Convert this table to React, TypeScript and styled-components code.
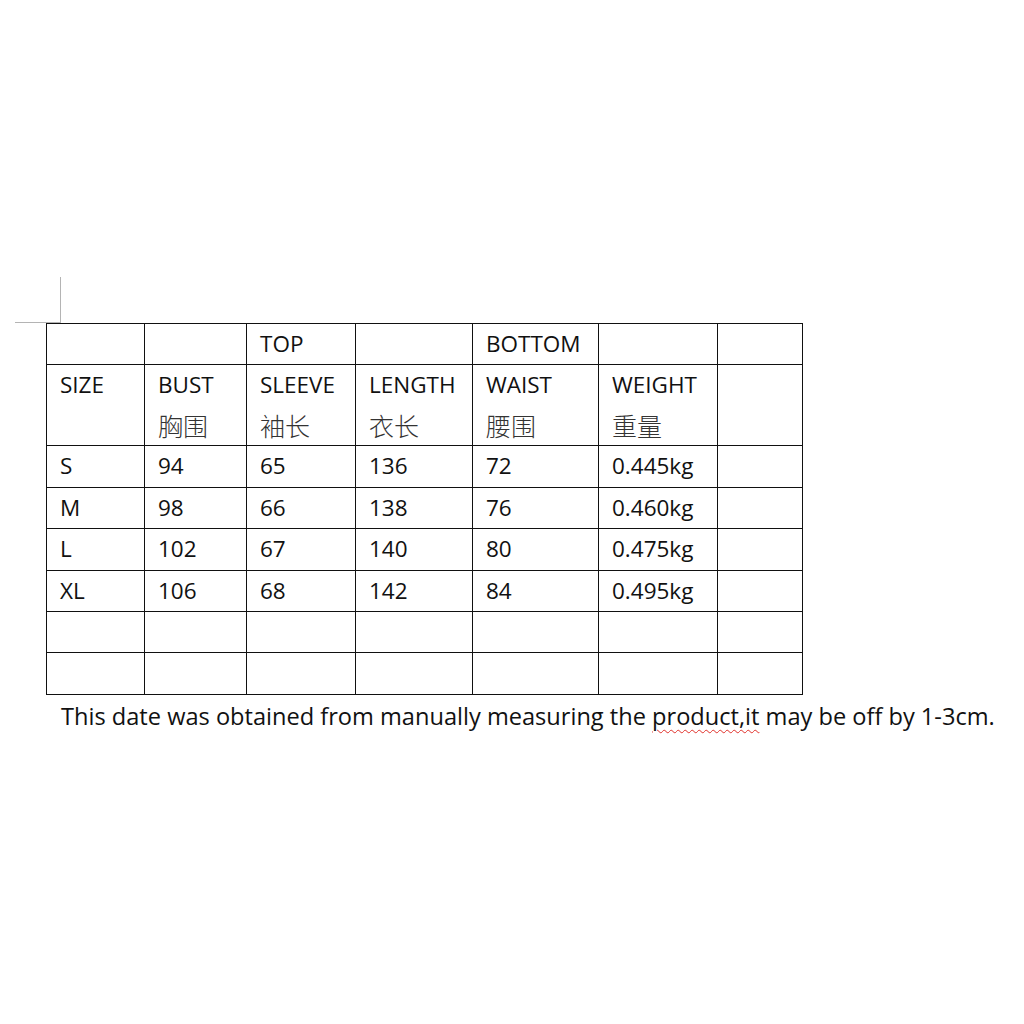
import React from "react";
import styled, { createGlobalStyle } from "styled-components";

const GlobalStyle = createGlobalStyle`
  html, body {
    margin: 0;
    padding: 0;
    background: #fff;
  }
  body {
    font-family: "Open Sans", "Noto Sans CJK SC", sans-serif;
    color: #111;
  }
`;

const Page = styled.div`
  width: 1024px;
  height: 1024px;
  box-sizing: border-box;
  padding: 323px 0 0 46px;
`;

const TableWrap = styled.div`
  position: relative;
  width: 757px;
`;

const CornerV = styled.div`
  position: absolute;
  left: 14px;
  top: -46px;
  width: 1px;
  height: 46px;
  background: #b4b4b4;
`;

const CornerH = styled.div`
  position: absolute;
  left: -31px;
  top: -1px;
  width: 45px;
  height: 1px;
  background: #b4b4b4;
`;

const Table = styled.table`
  border-collapse: collapse;
  table-layout: fixed;
  width: 757px;
`;

const Row = styled.tr<{ $h: number }>`
  height: ${(p) => p.$h}px;
`;

const Cell = styled.td`
  border: 1px solid #111;
  padding: 0 0 0 13px;
  vertical-align: top;
  font-size: 22.5px;
  line-height: 40px;
  white-space: nowrap;
  overflow: hidden;
`;

const Zh = styled.span`
  display: block;
  font-family: "Noto Sans CJK SC", sans-serif;
  font-weight: 300;
  font-size: 25px;
  line-height: 40px;
  color: #333;
`;

const Note = styled.p`
  margin: 5px 0 0 15px;
  font-size: 23.6px;
  line-height: 32px;
  white-space: nowrap;
`;

const Squiggle = styled.span`
  text-decoration-line: underline;
  text-decoration-style: wavy;
  text-decoration-color: #e0302a;
  text-decoration-thickness: 1px;
  text-underline-offset: 4px;
`;

const widths = [98, 102, 109, 117, 126, 119, 85];

const rows = [
  ["S", "94", "65", "136", "72", "0.445kg"],
  ["M", "98", "66", "138", "76", "0.460kg"],
  ["L", "102", "67", "140", "80", "0.475kg"],
  ["XL", "106", "68", "142", "84", "0.495kg"],
];

const rowHeights = [42, 41, 42, 41];

const header = [
  ["SIZE", ""],
  ["BUST", "胸围"],
  ["SLEEVE", "袖长"],
  ["LENGTH", "衣长"],
  ["WAIST", "腰围"],
  ["WEIGHT", "重量"],
  ["", ""],
];

const App: React.FC = () => {
  return (
    <Page>
      <GlobalStyle />
      <TableWrap>
        <CornerV />
        <CornerH />
        <Table>
          <colgroup>
            {widths.map((w, i) => (
              <col key={i} style={{ width: w }} />
            ))}
          </colgroup>
          <tbody>
            <Row $h={41}>
              <Cell />
              <Cell />
              <Cell>TOP</Cell>
              <Cell />
              <Cell>BOTTOM</Cell>
              <Cell />
              <Cell />
            </Row>
            <Row $h={81}>
              {header.map(([en, zh], i) => (
                <Cell key={i}>
                  {en}
                  {zh && <Zh>{zh}</Zh>}
                </Cell>
              ))}
            </Row>
            {rows.map((r, ri) => (
              <Row key={r[0]} $h={rowHeights[ri]}>
                {r.map((v, i) => (
                  <Cell key={i}>{v}</Cell>
                ))}
                <Cell />
              </Row>
            ))}
            <Row $h={41}>
              {widths.map((_, i) => (
                <Cell key={i} />
              ))}
            </Row>
            <Row $h={42}>
              {widths.map((_, i) => (
                <Cell key={i} />
              ))}
            </Row>
          </tbody>
        </Table>
      </TableWrap>
      <Note>
        This date was obtained from manually measuring the{" "}
        <Squiggle>product,it</Squiggle> may be off by 1-3cm.
      </Note>
    </Page>
  );
};

export default App;
